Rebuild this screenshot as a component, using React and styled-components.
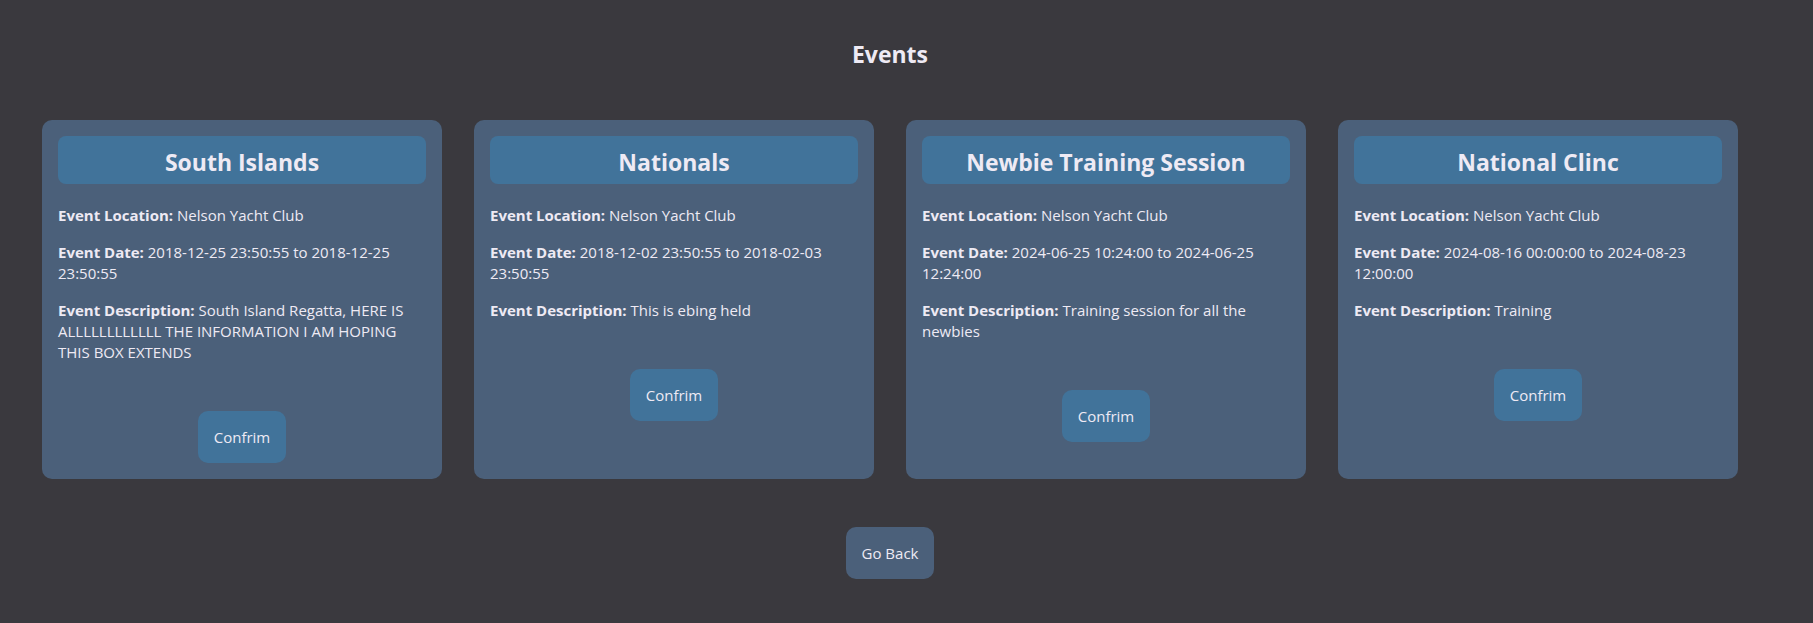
import React from "react";
import styled, { createGlobalStyle } from "styled-components";

const GlobalStyle = createGlobalStyle`
  body {
    margin: 0;
    background: #3a393e;
    color: #eeeaf4;
    font-family: "Open Sans", "Noto Sans", sans-serif;
  }
`;

const Page = styled.div`
  width: 1780px;
  min-height: 623px;
  display: flex;
  flex-direction: column;
  align-items: center;
  padding-top: 38px;
  box-sizing: border-box;
`;

const Heading = styled.h1`
  margin: 0 0 50px;
  font-size: 23px;
  line-height: 32px;
  font-weight: 700;
`;

const CardRow = styled.div`
  display: flex;
  gap: 32px;
  align-items: stretch;
`;

const Card = styled.div`
  width: 400px;
  box-sizing: border-box;
  padding: 16px;
  background: #4b607a;
  border-radius: 10px;
  display: flex;
  flex-direction: column;
`;

const CardTitle = styled.h2`
  margin: 0 0 5px;
  height: 48px;
  box-sizing: border-box;
  padding-top: 3px;
  display: flex;
  align-items: center;
  justify-content: center;
  background: #41739a;
  border-radius: 8px;
  font-size: 23px;
  font-weight: 700;
`;

const Field = styled.p`
  margin: 16px 0 0;
  font-size: 15px;
  line-height: 21px;
`;

const Button = styled.button`
  align-self: center;
  margin-top: ${(p) => p.$top || 0}px;
  padding: 15px 16px;
  border: none;
  border-radius: 10px;
  background: ${(p) => p.$bg};
  color: #eeeaf4;
  font-family: "Open Sans", "Noto Sans", sans-serif;
  font-size: 15px;
  line-height: 22px;
  white-space: nowrap;
`;

const events = [
  {
    name: "South Islands",
    location: "Nelson Yacht Club",
    date: "2018-12-25 23:50:55 to 2018-12-25 23:50:55",
    description:
      "South Island Regatta, HERE IS ALLLLLLLLLLLL THE INFORMATION I AM HOPING THIS BOX EXTENDS",
  },
  {
    name: "Nationals",
    location: "Nelson Yacht Club",
    date: "2018-12-02 23:50:55 to 2018-02-03 23:50:55",
    description: "This is ebing held",
  },
  {
    name: "Newbie Training Session",
    location: "Nelson Yacht Club",
    date: "2024-06-25 10:24:00 to 2024-06-25 12:24:00",
    description: "Training session for all the newbies",
  },
  {
    name: "National Clinc",
    location: "Nelson Yacht Club",
    date: "2024-08-16 00:00:00 to 2024-08-23 12:00:00",
    description: "Training",
  },
];

export default function App() {
  return (
    <>
      <GlobalStyle />
      <Page>
        <Heading>Events</Heading>
        <CardRow>
          {events.map((ev) => (
            <Card key={ev.name}>
              <CardTitle>{ev.name}</CardTitle>
              <Field>
                <strong>Event Location:</strong> {ev.location}
              </Field>
              <Field>
                <strong>Event Date:</strong> {ev.date}
              </Field>
              <Field>
                <strong>Event Description:</strong> {ev.description}
              </Field>
              <Button $bg="#41739a" $top={48}>
                Confrim
              </Button>
            </Card>
          ))}
        </CardRow>
        <Button $bg="#4b607a" $top={48}>
          Go Back
        </Button>
      </Page>
    </>
  );
}
